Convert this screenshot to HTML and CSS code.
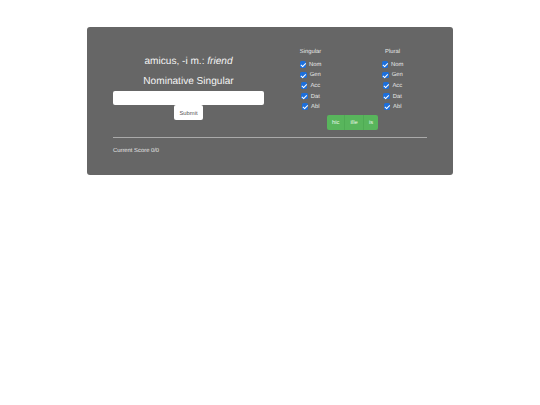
FILE: index.html
```html
<!DOCTYPE html>
<html lang="en">
<head>
<meta charset="utf-8">
<title>Latin Declensions</title>
<link rel="stylesheet" href="styles.css">
</head>
<body>
<main class="panel">
  <div class="top">
    <section class="quiz">
      <h1 class="word">amicus, -i m.: <em>friend</em></h1>
      <h2 class="form">Nominative Singular</h2>
      <input class="answer" type="text" aria-label="Answer">
      <button class="submit" type="button">Submit</button>
    </section>
    <section class="options">
      <div class="cols">
        <div class="col">
          <div class="col-title">Singular</div>
          <label class="check"><input type="checkbox" checked>Nom</label>
          <label class="check"><input type="checkbox" checked>Gen</label>
          <label class="check"><input type="checkbox" checked>Acc</label>
          <label class="check"><input type="checkbox" checked>Dat</label>
          <label class="check"><input type="checkbox" checked>Abl</label>
        </div>
        <div class="col">
          <div class="col-title">Plural</div>
          <label class="check"><input type="checkbox" checked>Nom</label>
          <label class="check"><input type="checkbox" checked>Gen</label>
          <label class="check"><input type="checkbox" checked>Acc</label>
          <label class="check"><input type="checkbox" checked>Dat</label>
          <label class="check"><input type="checkbox" checked>Abl</label>
        </div>
      </div>
      <div class="group">
        <button class="pron" type="button">hic</button>
        <button class="pron" type="button">ille</button>
        <button class="pron" type="button">is</button>
      </div>
    </section>
  </div>
  <hr class="rule">
  <p class="score">Current Score 0/0</p>
</main>
</body>
</html>
```
FILE: styles.css
```css
* { box-sizing: border-box; }
html, body { margin: 0; background: #fff; }
body { padding-top: 27px; font-family: "Liberation Sans", Arial, sans-serif; text-rendering: geometricPrecision; }
.panel {
  width: 366px;
  height: 148px;
  margin-left: 87px;
  padding: 21px 26px 0;
  background: #666;
  border-radius: 3px;
  color: #fff;
}
.top { display: flex; }
.quiz {
  width: 151px;
  padding-top: 7px;
  display: flex;
  flex-direction: column;
  align-items: center;
}
.word, .form { margin: 0; font-weight: 400; font-size: 10.1px; line-height: 14px; color: #f4f4f4; }
.form { margin-top: 6px; }
.answer {
  width: 151px;
  height: 14px;
  margin: 2px 0 0;
  padding: 0;
  border: 0;
  border-radius: 2px;
  background: #fff;
}
.submit {
  width: 29px;
  height: 15px;
  padding: 0;
  border: 0;
  border-radius: 2px;
  background: #fff;
  color: #555;
  font: 5.85px "Liberation Sans", Arial, sans-serif;
}
.options { margin-left: 16px; width: 142px; display: flex; flex-direction: column; align-items: center; }
.cols { display: flex; justify-content: space-between; width: 122px; margin-left: 1px; }
.col { width: 40px; display: flex; flex-direction: column; align-items: center; }
.col-title { font-size: 5.85px; line-height: 7px; height: 8px; padding-top: 1px; color: #e6e6e6; margin-bottom: 3px; }
.check {
  display: flex;
  align-items: center;
  justify-content: center;
  height: 10.6px;
  padding-top: 1px;
  font-size: 5.85px;
  color: #e6e6e6;
}
.check input {
  appearance: none;
  position: relative;
  width: 6.5px;
  height: 6.5px;
  margin: -1px 3px 0 0;
  border-radius: 1.5px;
  background: #1c6fdc;
}
.check input::after {
  content: "";
  position: absolute;
  left: 2.2px;
  top: 0.9px;
  width: 2px;
  height: 3.6px;
  border: solid #fff;
  border-width: 0 1px 1px 0;
  transform: rotate(45deg);
}
.group { display: flex; margin: 3px 0 0 3px; border-radius: 2px; overflow: hidden; }
.pron {
  height: 15px;
  padding: 0 5.1px;
  border: 0;
  background: #58b55c;
  color: #e8f5e9;
  font: 5.85px "Liberation Sans", Arial, sans-serif;
}
.pron + .pron { border-left: 1px solid #4fab54; }
.rule { margin: 7px 0 0; border: 0; height: 1px; background: #aaa; }
.score { margin: 7px 0 0; font-size: 5.85px; line-height: 12px; color: #e6e6e6; }
```
